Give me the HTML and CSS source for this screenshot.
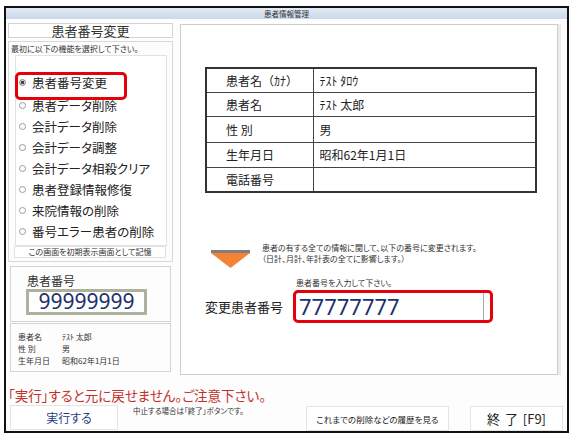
FILE: index.html
```html
<!DOCTYPE html>
<html lang="ja">
<head>
<meta charset="utf-8">
<title>患者情報管理</title>
<link rel="stylesheet" href="styles.css">
</head>
<body>
<div class="window">
  <div class="titlebar">患者情報管理</div>
  <div class="main">
    <div class="left">
      <div class="ltitle">患者番号変更</div>
      <div class="menu">
        <div class="hint">最初に以下の機能を選択して下さい。</div>
        <div class="list">
          <div class="item sel"><span class="radio on"></span>患者番号変更</div>
          <div class="item"><span class="radio"></span>患者データ削除</div>
          <div class="item"><span class="radio"></span>会計データ削除</div>
          <div class="item"><span class="radio"></span>会計データ調整</div>
          <div class="item"><span class="radio"></span>会計データ相殺クリア</div>
          <div class="item"><span class="radio"></span>患者登録情報修復</div>
          <div class="item"><span class="radio"></span>来院情報の削除</div>
          <div class="item"><span class="radio"></span>番号エラー患者の削除</div>
        </div>
        <div class="save">この画面を初期表示画面として記憶</div>
      </div>
      <div class="pnum">
        <div class="plabel">患者番号</div>
        <div class="pbox">99999999</div>
      </div>
      <div class="pinfo">
        <div class="prow"><span class="pk">患者名</span><span>ﾃｽﾄ 太郎</span></div>
        <div class="prow"><span class="pk">性 別</span><span>男</span></div>
        <div class="prow"><span class="pk">生年月日</span><span>昭和62年1月1日</span></div>
      </div>
    </div>
    <div class="right">
      <table class="info">
        <tr class="r1"><th>患者名（ｶﾅ）</th><td>ﾃｽﾄ ﾀﾛｳ</td></tr>
        <tr class="r2"><th>患者名</th><td>ﾃｽﾄ 太郎</td></tr>
        <tr class="r3"><th>性 別</th><td>男</td></tr>
        <tr class="r4"><th>生年月日</th><td>昭和62年1月1日</td></tr>
        <tr class="r5"><th>電話番号</th><td></td></tr>
      </table>
      <div class="notice">
        <svg class="arrow" width="39" height="18" viewBox="0 0 39 18">
          <rect x="0" y="0" width="39" height="3" fill="#7f7f7f"/>
          <polygon points="0,3 39,3 19.5,18" fill="#f58336"/>
        </svg>
        <div class="ntext">
          <div>患者の有する全ての情報に関して、以下の番号に変更されます。</div>
          <div>（日計、月計、年計表の全てに影響します。）</div>
        </div>
      </div>
      <div class="hint2">患者番号を入力して下さい。</div>
      <div class="newrow">
        <span class="newlabel">変更患者番号</span>
        <div class="newbox"><div class="newinput">77777777</div></div>
      </div>
    </div>
  </div>
  <div class="warn">「実行」すると元に戻せません。ご注意下さい。</div>
  <div class="actions">
    <button class="btn exec">実行する</button>
    <div class="cancel">中止する場合は「終了」ボタンです。</div>
    <button class="btn hist">これまでの削除などの履歴を見る</button>
    <button class="btn end">終 了 [F9]</button>
  </div>
</div>
</body>
</html>
```

FILE: styles.css
```css
* { box-sizing: border-box; }
body {
  margin: 0;
  background: #fff;
  font-family: "Noto Sans CJK JP", "Noto Sans", sans-serif;
  font-feature-settings: "palt";
  color: #222;
}
.window {
  margin: 6px 0 0 4px;
  width: 565px;
  height: 427px;
  border: 2px solid #111;
  background: #fdfdfd;
  display: flex;
  flex-direction: column;
}
.titlebar {
  height: 11px;
  background: linear-gradient(#e3ebf5, #c9d8ea);
  font-size: 7.5px;
  line-height: 11px;
  text-align: center;
  color: #333;
}
.main {
  display: flex;
  gap: 7px;
  padding: 4px 0 0 2px;
}
.left {
  width: 165px;
  display: flex;
  flex-direction: column;
}
.ltitle {
  height: 15px;
  border: 1px solid #d4d4d4;
  background: #fff;
  font-size: 13px;
  line-height: 13px;
  text-align: center;
  color: #333;
}
.menu {
  margin-top: 3px;
  height: 221px;
  border: 1px solid #d8d8d8;
  display: flex;
  flex-direction: column;
}
.hint {
  height: 13px;
  font-size: 8px;
  line-height: 12px;
  padding: 1px 0 0 2px;
  color: #333;
}
.list {
  margin-left: 6px;
  width: 152px;
  height: 191px;
  border: 1px solid #e2e2e2;
  background: #fff;
  padding-top: 16px;
}
.item {
  position: relative;
  height: 21px;
  line-height: 20px;
  font-size: 12.5px;
  padding-left: 3px;
  display: flex;
  align-items: center;
  color: #222;
}
.item.sel { margin-bottom: 2px; }
.radio {
  width: 7px;
  height: 7px;
  border: 1px solid #9a9a9a;
  border-radius: 50%;
  margin-right: 6px;
  background: #fff;
  flex: none;
}
.radio.on {
  background: radial-gradient(circle, #444 0 1.6px, #d8d8d8 2px);
  border-color: #888;
}
.sel::after {
  content: "";
  position: absolute;
  left: -1px;
  top: 0;
  width: 106px;
  height: 22px;
  border: 3px solid #e6000a;
  border-radius: 5px;
}
.save {
  margin: 0 0 0 5px;
  width: 152px;
  height: 12px;
  border: 1px solid #e2e2e2;
  background: #fff;
  font-size: 8px;
  line-height: 10px;
  text-align: center;
  color: #333;
}
.pnum {
  margin: 4px 2px 0;
  height: 56px;
  border: 1px solid #d4d4d4;
  padding: 7px 0 0 16px;
}
.plabel {
  font-size: 12px;
  line-height: 14px;
  color: #333;
}
.pbox {
  margin: 1px 0 0 -1px;
  width: 121px;
  height: 26px;
  border: 3px solid #aeb19c;
  background: #fff;
  font-family: "Noto Sans", sans-serif;
  font-size: 21px;
  line-height: 19px;
  text-align: center;
  color: #1d2f6c;
}
.pinfo {
  margin: 1px 2px 0;
  height: 49px;
  border: 1px solid #d4d4d4;
  padding: 7px 0 0 7px;
}
.prow {
  display: flex;
  font-size: 8px;
  line-height: 12px;
  color: #333;
}
.pk { width: 44px; }
.right {
  margin-top: 1px;
  width: 378px;
  height: 351px;
  border: 1px solid #cdcdcd;
  background: #fff;
  box-shadow: 3px 0 0 #ececec;
  padding: 42px 0 0 24px;
}
.info {
  border-collapse: collapse;
  width: 332px;
  border: 2px solid #333;
}
.info th, .info td {
  border: 1px solid #444;
  font-size: 12px;
  font-weight: normal;
  text-align: left;
  padding: 0;
  color: #222;
}
.info th { width: 107px; padding-left: 19px; font-feature-settings: normal; }
.info td { padding-left: 6px; }
.r1, .r2 { height: 24px; }
.r3 { height: 26px; }
.r4, .r5 { height: 25px; }
.notice {
  display: flex;
  margin-top: 49px;
}
.arrow {
  margin: 8px 0 0 6px;
  flex: none;
}
.ntext {
  margin-left: 12px;
  font-size: 8px;
  line-height: 11px;
  color: #333;
}
.hint2 {
  margin: 9px 0 0 91px;
  font-size: 8px;
  line-height: 11px;
  color: #333;
}
.newrow {
  display: flex;
  align-items: center;
  margin-top: 2px;
}
.newlabel {
  width: 88px;
  font-size: 13px;
  line-height: 33px;
  color: #222;
}
.newbox {
  width: 200px;
  height: 33px;
  border: 3px solid #e6000a;
  border-radius: 5px;
  background: #fff;
}
.newinput {
  width: 188px;
  height: 100%;
  border-right: 1px solid #aaa;
  padding-left: 3px;
  font-family: "Noto Sans", sans-serif;
  font-size: 22px;
  line-height: 26px;
  color: #1d2f6c;
}
.warn {
  margin-top: 11px;
  padding-left: 2px;
  font-size: 13.5px;
  line-height: 18px;
  color: #c4302b;
}
.actions {
  display: flex;
  align-items: flex-start;
  height: 25px;
  margin-top: 1px;
  padding-left: 4px;
}
.btn {
  height: 25px;
  border: 1px solid #e4e4e4;
  background: #fff;
  font-family: "Noto Sans CJK JP", "Noto Sans", sans-serif;
  font-feature-settings: "palt";
  padding: 0;
  color: #222;
}
.exec {
  width: 108px;
  font-size: 12px;
  padding-left: 10px;
  color: #1f3c82;
}
.cancel {
  width: 188px;
  padding-left: 15px;
  font-size: 7.5px;
  line-height: 11px;
  color: #333;
}
.hist {
  width: 143px;
  font-size: 8.5px;
  margin-top: 1px;
}
.end {
  width: 93px;
  margin: 1px 0 0 21px;
  font-size: 13px;
  word-spacing: 2px;
}
```
